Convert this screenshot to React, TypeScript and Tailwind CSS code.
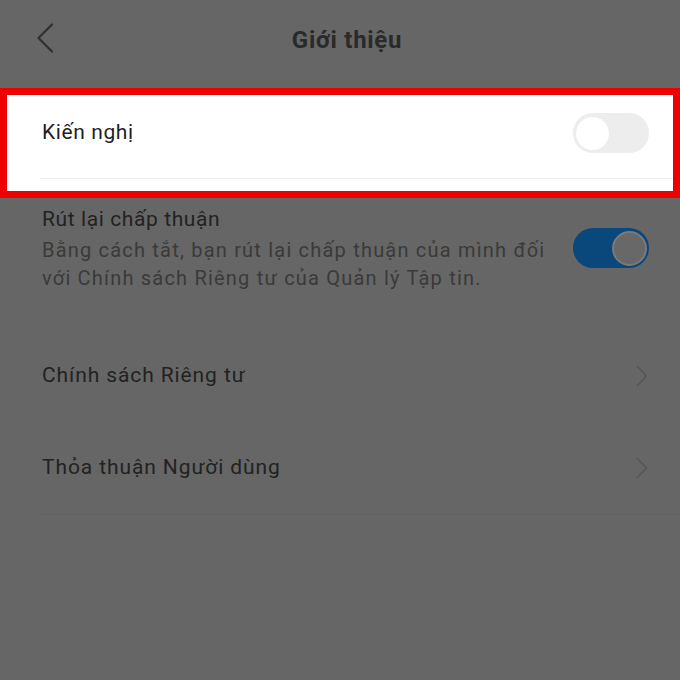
function Toggle({ on }: { on: boolean }) {
  if (on) {
    return (
      <div className="flex h-[40px] w-[76px] shrink-0 items-center justify-end rounded-full bg-[#0a477a] px-[2px]">
        <div className="h-[35px] w-[35px] rounded-full border-[2px] border-[#7a7a7a] bg-[#686868]" />
      </div>
    );
  }
  return (
    <div className="flex h-[40px] w-[76px] shrink-0 items-center rounded-full bg-[#ededed] px-[3px]">
      <div className="h-[33px] w-[33px] rounded-full bg-white" />
    </div>
  );
}

function Chevron() {
  return (
    <svg width="12" height="22" viewBox="0 0 12 22" fill="none" className="shrink-0">
      <path d="M1.5 1.5 L10.5 11 L1.5 20.5" stroke="#575757" strokeWidth="1.6" strokeLinecap="round" strokeLinejoin="round" />
    </svg>
  );
}

function LinkRow({ label }: { label: string }) {
  return (
    <div className="flex h-[92px] items-center justify-between pl-[42px] pr-[32px]">
      <span className="text-[21px] tracking-[0.9px] text-[#222222]">{label}</span>
      <Chevron />
    </div>
  );
}

export default function App() {
  return (
    <div
      className="h-[680px] w-[680px] overflow-hidden bg-[#666666]"
      style={{ fontFamily: 'Roboto, "Noto Sans", sans-serif' }}
    >
      {/* Header */}
      <div className="relative flex h-[88px] items-center justify-center pl-[14px]">
        <svg width="18" height="30" viewBox="0 0 18 30" fill="none" className="absolute left-[36px] top-[23px]">
          <path d="M16 1.5 L2.5 15 L16 28.5" stroke="#303030" strokeWidth="2.2" strokeLinecap="round" strokeLinejoin="round" />
        </svg>
        <h1 className="pb-[8px] text-[24px] font-bold tracking-[0.7px] text-[#2a2a2a]">Giới thiệu</h1>
      </div>

      {/* Highlighted row */}
      <div className="h-[110px] border-[7px] border-[#ee0000] bg-white">
        <div className="flex h-[76px] items-center justify-between pl-[35px] pr-[24px]">
          <span className="text-[21px] tracking-[0.6px] text-[#1f1f1f]">Kiến nghị</span>
          <Toggle on={false} />
        </div>
        <div className="ml-[33px] mt-[7px] h-px bg-[#ececec]" />
      </div>

      {/* Withdraw consent */}
      <div className="flex items-center justify-between pl-[42px] pr-[31px] pt-[6px]">
        <div className="flex flex-col">
          <span className="text-[21px] leading-[30px] tracking-[0.6px] text-[#222222]">Rút lại chấp thuận</span>
          <span className="mt-[2px] w-[520px] text-[20px] leading-[28px] tracking-[1.2px] text-[#3a3a3a]">
            Bằng cách tắt, bạn rút lại chấp thuận của mình đối với Chính sách Riêng tư của Quản lý Tập tin.
          </span>
        </div>
        <Toggle on />
      </div>

      {/* Links */}
      <div className="mt-[38px]">
        <LinkRow label="Chính sách Riêng tư" />
        <LinkRow label="Thỏa thuận Người dùng" />
      </div>
      <div className="ml-[40px] h-px bg-[#626262]" />
    </div>
  );
}
